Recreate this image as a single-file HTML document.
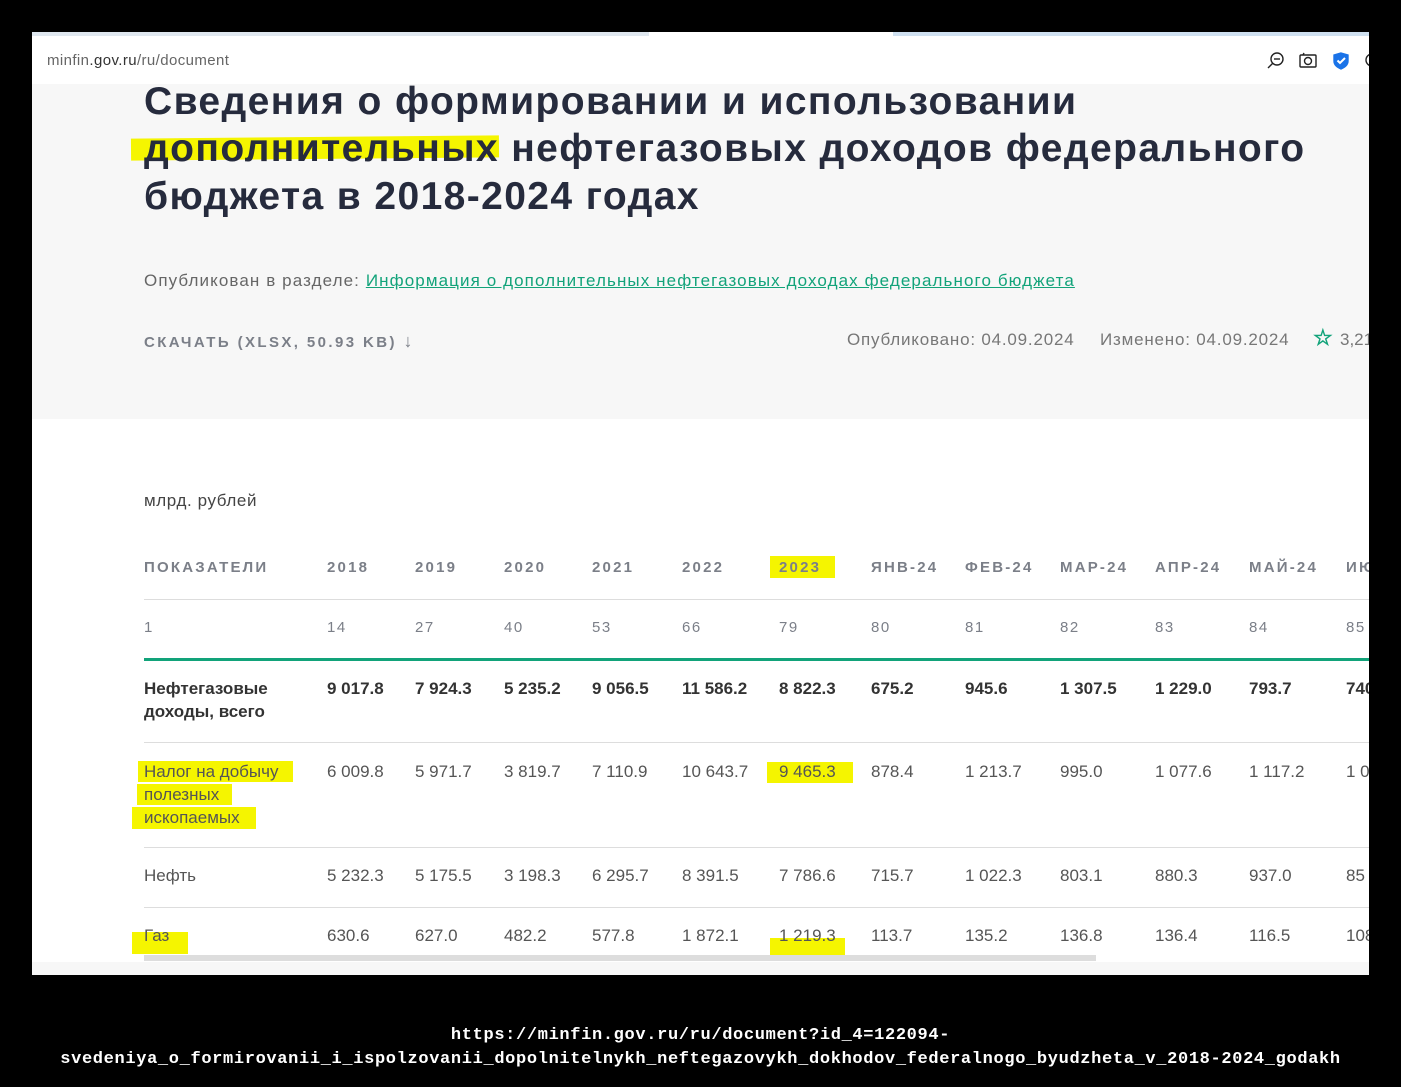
<!DOCTYPE html>
<html><head><meta charset="utf-8"><style>
*{margin:0;padding:0;box-sizing:border-box}
body{width:1401px;height:1087px;background:#000;position:relative;overflow:hidden;font-family:"Liberation Sans",sans-serif}
.a{position:absolute;white-space:nowrap}
#page{position:absolute;left:32px;top:32px;width:1337px;height:943px;background:#fff;overflow:hidden}
.t{font-weight:bold;font-size:39px;color:#262b3d;left:144px;line-height:47px;letter-spacing:1.4px}
.h{font-size:15px;font-weight:bold;color:#7b7f88;letter-spacing:2.2px}
.n{font-size:15px;color:#7b7f88;letter-spacing:1.5px}
.b{font-size:17px;font-weight:bold;color:#333}
.r{font-size:17px;color:#555}
.hl{position:absolute;background:#f5f500}
.ln{position:absolute;left:144px;width:1225px;height:1px;background:#ddd}
</style></head><body>
<div id="page">
<div class="a" style="left:0;top:0;width:617px;height:4px;background:#dfe7ef"></div>
<div class="a" style="left:861px;top:0;width:476px;height:4px;background:#cfe0f0"></div>
<div class="a" style="left:0;top:52px;width:1337px;height:335px;background:#f7f7f7"></div>
<div class="a" style="left:0;top:930px;width:1337px;height:13px;background:#f7f7f7"></div>
</div>
<div class="a" style="left:47px;top:52px;font-size:15px;color:#666;letter-spacing:0.4px">minfin<span style="color:#333">.gov.ru</span>/ru/document</div>
<svg class="a" style="left:1266px;top:51px" width="110" height="20" viewBox="0 0 110 20" fill="none" stroke="#222" stroke-width="1.4">
<circle cx="11" cy="8" r="6"/><line x1="8" y1="8" x2="14" y2="8"/><line x1="7" y1="12" x2="2" y2="17"/>
<rect x="34" y="4" width="16" height="12" rx="1"/><circle cx="42" cy="10" r="3.5"/><line x1="37" y1="4" x2="38" y2="2"/>
<path d="M75 2 L82 4 V10 Q82 15 75 18 Q68 15 68 10 V4 Z" fill="#1a73e8" stroke="#1a73e8"/><path d="M71.5 9.5 L74 12 L79 7" stroke="#fff" stroke-width="2"/>
<circle cx="106" cy="9" r="6"/>
</svg>
<div class="hl" style="left:131px;top:137px;width:368px;height:22px;transform:rotate(-0.5deg)"></div>
<div class="a t" style="top:78px">Сведения о формировании и использовании</div>
<div class="a t" style="top:125px">дополнительных нефтегазовых доходов федерального</div>
<div class="a t" style="top:173px">бюджета в 2018-2024 годах</div>
<div class="a" style="left:144px;top:271px;font-size:17px;color:#666;letter-spacing:1.1px">Опубликован в разделе: <span style="color:#12a37a;text-decoration:underline">Информация о дополнительных нефтегазовых доходах федерального бюджета</span></div>
<div class="a h" style="left:144px;top:331px;letter-spacing:2.4px">СКАЧАТЬ (XLSX, 50.93 KB) <span style="font-weight:normal;font-size:18px">↓</span></div>
<div class="a" style="left:847px;top:330px;font-size:17px;color:#777;letter-spacing:0.8px">Опубликовано: 04.09.2024</div>
<div class="a" style="left:1100px;top:330px;font-size:17px;color:#777;letter-spacing:0.8px">Изменено: 04.09.2024</div>
<div class="a" style="left:1313px;top:325px;font-size:22px;color:#12a37a;font-weight:bold">☆</div>
<div class="a" style="left:1340px;top:330px;font-size:17px;color:#777">3,21</div>
<div class="a" style="left:144px;top:491px;font-size:17px;color:#444;letter-spacing:0.6px">млрд. рублей</div>

<div class="hl" style="left:770px;top:556px;width:65px;height:22px"></div>
<div class="hl" style="left:138px;top:761px;width:155px;height:21px"></div>
<div class="hl" style="left:137px;top:784px;width:95px;height:21px"></div>
<div class="hl" style="left:132px;top:807px;width:124px;height:22px"></div>
<div class="hl" style="left:767px;top:762px;width:86px;height:21px"></div>
<div class="hl" style="left:132px;top:932px;width:56px;height:22px"></div>
<div class="hl" style="left:770px;top:938px;width:75px;height:22px"></div>

<div class="ln" style="top:599px"></div>
<div class="ln" style="top:658px;height:3px;background:#12a37a"></div>
<div class="ln" style="top:742px"></div>
<div class="ln" style="top:847px"></div>
<div class="ln" style="top:907px"></div>
<div class="a" style="left:144px;top:955px;width:952px;height:6px;background:#ddd"></div>
<div class="a" style="left:0;top:975px;width:1401px;height:112px;background:#000"></div>
<div class="a" style="left:1369px;top:0;width:32px;height:1087px;background:#000"></div>

<div id="tbl"></div>
<div class="a" style="left:0;top:1024px;width:1401px;text-align:center;font-family:'Liberation Mono',monospace;font-size:17px;color:#fff;line-height:24px;font-weight:bold;letter-spacing:0.65px">https://minfin.gov.ru/ru/document?id_4=122094-<br>svedeniya_o_formirovanii_i_ispolzovanii_dopolnitelnykh_neftegazovykh_dokhodov_federalnogo_byudzheta_v_2018-2024_godakh</div>
<script>
var xs=[144,327,415,504,592,682,779,871,965,1060,1155,1249,1346];
var rows=[
 ["h",556,["ПОКАЗАТЕЛИ","2018","2019","2020","2021","2022","2023","ЯНВ-24","ФЕВ-24","МАР-24","АПР-24","МАЙ-24","ИЮ"]],
 ["n",616,["1","14","27","40","53","66","79","80","81","82","83","84","85"]],
 ["b",677,["Нефтегазовые<br>доходы, всего","9 017.8","7 924.3","5 235.2","9 056.5","11 586.2","8 822.3","675.2","945.6","1 307.5","1 229.0","793.7","740"]],
 ["r",760,["Налог на добычу<br>полезных<br>ископаемых","6 009.8","5 971.7","3 819.7","7 110.9","10 643.7","9 465.3","878.4","1 213.7","995.0","1 077.6","1 117.2","1 0"]],
 ["r",864,["Нефть","5 232.3","5 175.5","3 198.3","6 295.7","8 391.5","7 786.6","715.7","1 022.3","803.1","880.3","937.0","85"]],
 ["r",924,["Газ","630.6","627.0","482.2","577.8","1 872.1","1 219.3","113.7","135.2","136.8","136.4","116.5","108"]]];
var h="";rows.forEach(function(r){r[2].forEach(function(t,i){
h+='<div class="a '+r[0]+'" style="left:'+xs[i]+'px;top:'+r[1]+'px;line-height:23px;'+(i==12?'width:23px;overflow:hidden':'')+'">'+t+'</div>';});});
document.getElementById("tbl").innerHTML=h;
</script>
</body></html>
